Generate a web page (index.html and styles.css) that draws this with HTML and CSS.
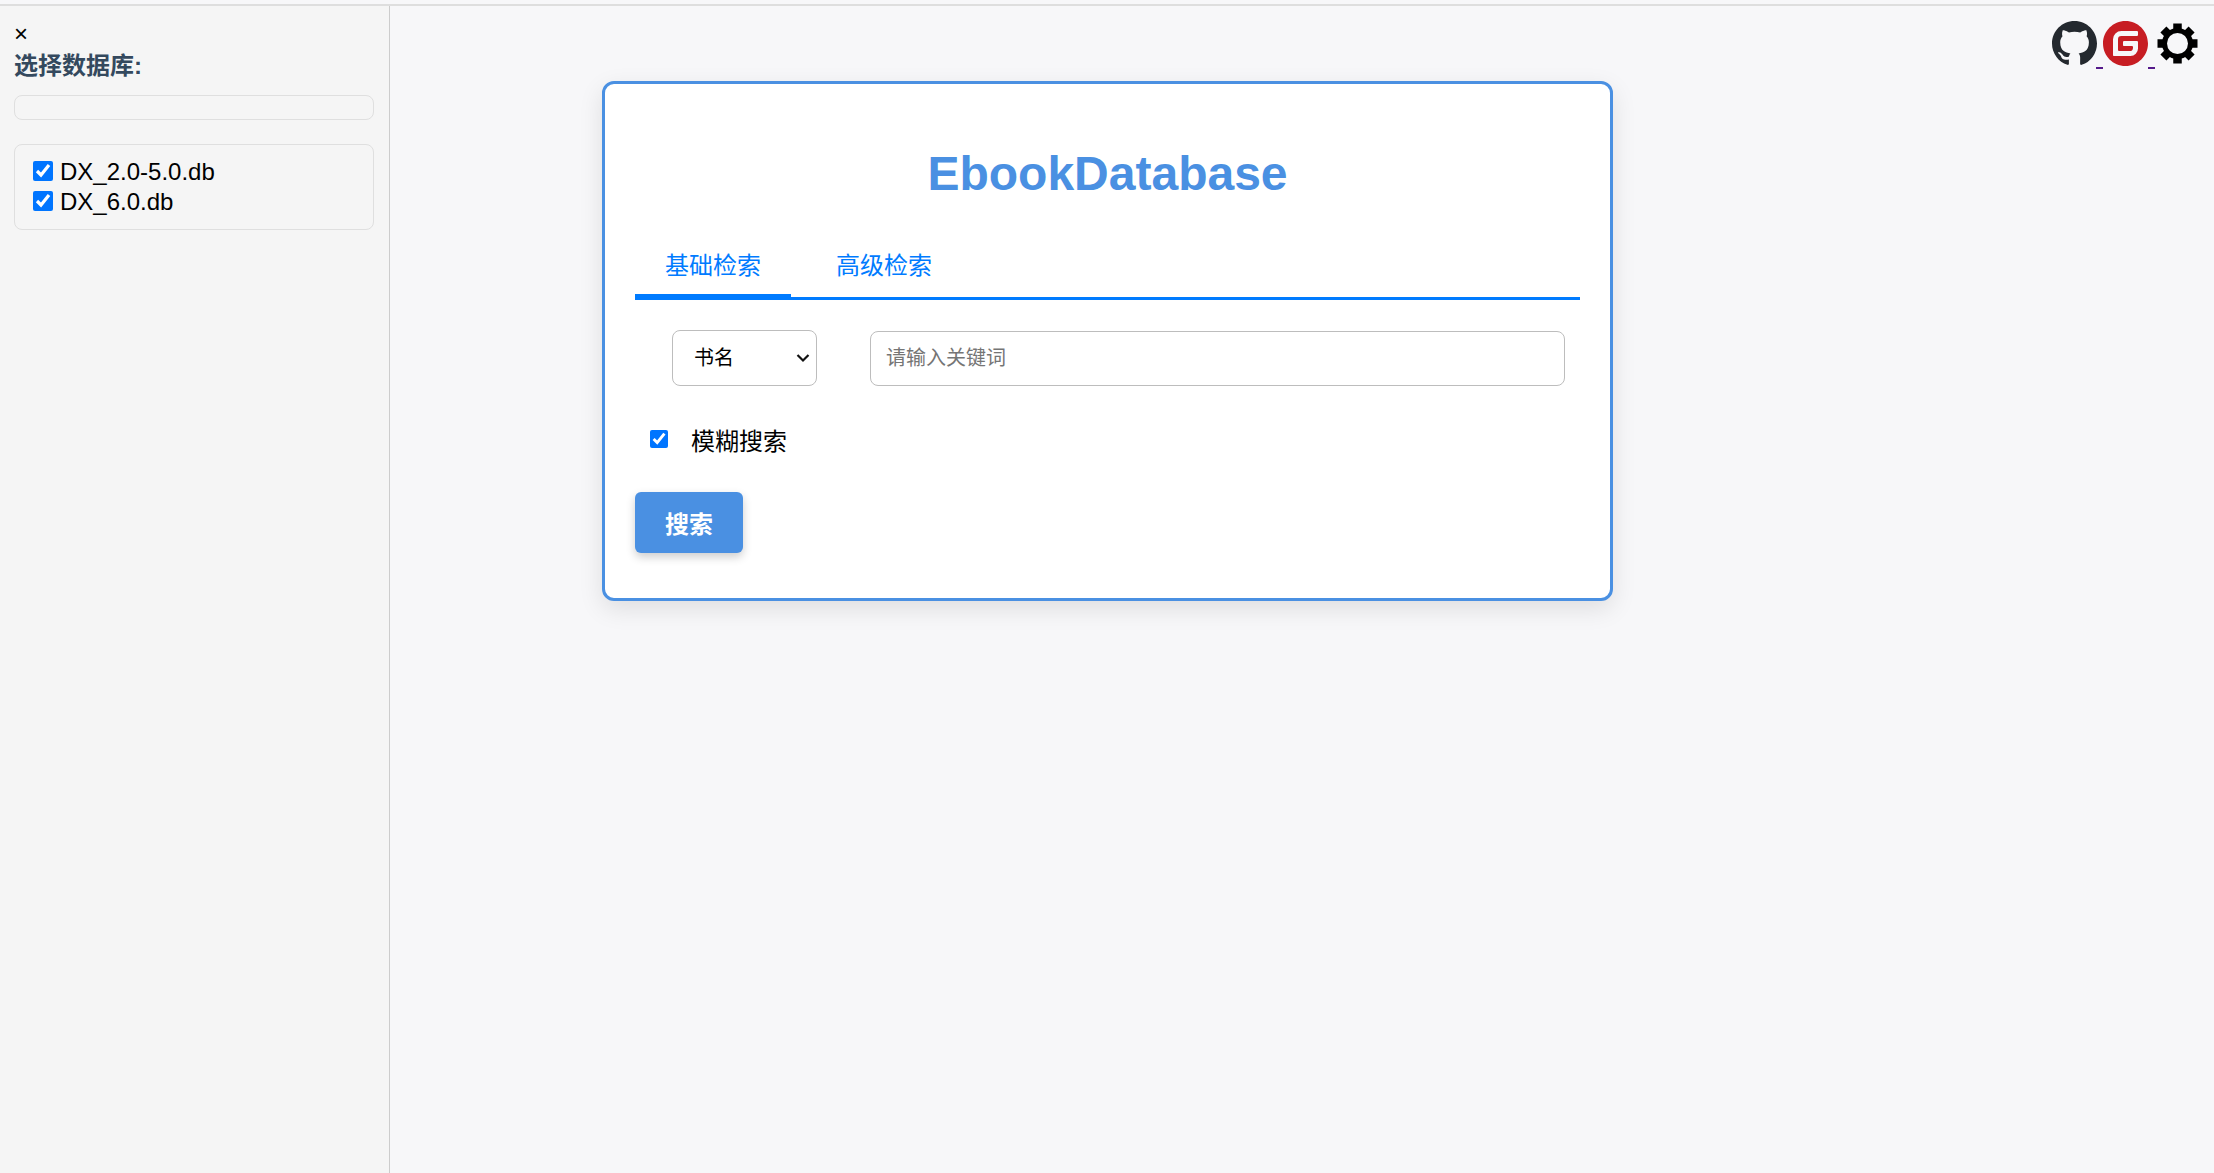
FILE: index.html
```html
<!DOCTYPE html>
<html lang="zh-CN">
<head>
<meta charset="utf-8">
<title>EbookDatabase</title>
<link rel="stylesheet" href="styles.css">
</head>
<body>
<div class="page">
  <aside class="sidebar">
    <div class="close">×</div>
    <div class="side-title">选择数据库:</div>
    <div class="side-empty"></div>
    <div class="db-list">
      <label class="db-item"><input class="db-check" type="checkbox" checked>DX_2.0-5.0.db</label>
      <label class="db-item"><input class="db-check" type="checkbox" checked>DX_6.0.db</label>
    </div>
  </aside>
  <main class="main">
    <section class="card">
      <h1 class="title">EbookDatabase</h1>
      <div class="tabs">
        <div class="tab active">基础检索</div>
        <div class="tab">高级检索</div>
      </div>
      <div class="search-row">
        <div class="select-wrap">
          <select class="field-select"><option>书名</option></select>
          <svg class="chevron" viewBox="0 0 14 10"><path d="M1.500 2L7 7.500L12.500 2" fill="none" stroke="#111" stroke-width="2.200"/></svg>
        </div>
        <input class="keyword" type="text" placeholder="请输入关键词">
      </div>
      <label class="fuzzy"><input class="fuzzy-check" type="checkbox" checked>模糊搜索</label>
      <button class="search-btn">搜索</button>
    </section>
  </main>
  <nav class="top-icons">
    <a class="icon-link" href="#"><svg class="icon" viewBox="0 0 16 16"><path fill="#24292f" d="M8 0C3.58 0 0 3.58 0 8c0 3.54 2.29 6.53 5.47 7.59.4.07.55-.17.55-.38 0-.19-.01-.82-.01-1.49-2.01.37-2.53-.49-2.69-.94-.09-.23-.48-.94-.82-1.13-.28-.15-.68-.52-.01-.53.63-.01 1.08.58 1.23.82.72 1.21 1.87.87 2.33.66.07-.52.28-.87.51-1.07-1.78-.2-3.64-.89-3.64-3.95 0-.87.31-1.59.82-2.15-.08-.2-.36-1.02.08-2.12 0 0 .67-.21 2.2.82.64-.18 1.32-.27 2-.27.68 0 1.36.09 2 .27 1.53-1.04 2.2-.82 2.2-.82.44 1.1.16 1.92.08 2.12.51.56.82 1.27.82 2.15 0 3.07-1.87 3.75-3.65 3.95.29.25.54.73.54 1.48 0 1.07-.01 1.93-.01 2.2 0 .21.15.46.55.38A8.013 8.013 0 0016 8c0-4.42-3.58-8-8-8z"/></svg><span class="dash"></span></a>
    <a class="icon-link" href="#"><svg class="icon" viewBox="0 0 1024 1024"><path fill="#c71d23" d="M512 1024C229.222 1024 0 794.778 0 512S229.222 0 512 0s512 229.222 512 512-229.222 512-512 512z m259.149-568.883h-290.74a25.293 25.293 0 0 0-25.292 25.293l-0.026 63.206c0 13.952 11.315 25.293 25.267 25.293h177.024c13.978 0 25.293 11.315 25.293 25.267v12.646a75.853 75.853 0 0 1-75.853 75.853h-240.23a25.293 25.293 0 0 1-25.267-25.293V417.203a75.853 75.853 0 0 1 75.827-75.853h353.946a25.293 25.293 0 0 0 25.267-25.292l0.077-63.207a25.293 25.293 0 0 0-25.268-25.293H417.152a189.62 189.62 0 0 0-189.62 189.645V771.15c0 13.977 11.316 25.293 25.294 25.293h372.94a170.65 170.65 0 0 0 170.65-170.65V480.384a25.293 25.293 0 0 0-25.293-25.267z"/></svg><span class="dash"></span></a>
    <svg class="gear" viewBox="0 0 41 41">
      <path stroke="#000" stroke-width="8.500" d="M20.500 0.500V40.500M0.500 20.500H40.500M6.400 6.400L34.600 34.600M34.600 6.400L6.400 34.600"/>
      <circle cx="20.500" cy="20.500" r="15.500" fill="#000"/>
      <circle cx="20.500" cy="20.500" r="10.500" fill="#f7f7f9"/>
    </svg>
  </nav>
</div>
</body>
</html>
```
FILE: styles.css
```css
* { box-sizing: border-box; }
html, body { margin: 0; height: 100%; }
body {
  font-family: "Liberation Sans", "Noto Sans CJK SC", sans-serif;
  background: #f7f7f9;
  overflow: hidden;
}
.page {
  position: relative;
  display: flex;
  height: 1169px;
  margin-top: 4px;
  border-top: 2px solid #dedede;
}
.sidebar {
  flex: 0 0 390px;
  padding: 13px 15px 0 14px;
  background: #f5f5f5;
  border-right: 1px solid #ccc;
}
.close {
  font-size: 24px;
  line-height: 30px;
  color: #000;
}
.side-title {
  font-size: 24px;
  line-height: 34px;
  font-weight: 700;
  color: #34495e;
}
.side-empty {
  height: 25px;
  margin-top: 12px;
  border: 1px solid #dfdfdf;
  border-radius: 8px;
}
.db-list {
  margin-top: 24px;
  height: 86px;
  padding: 12px 18px;
  border: 1px solid #dfdfdf;
  border-radius: 8px;
}
.db-item {
  display: flex;
  align-items: center;
  height: 30px;
  font-size: 24px;
  color: #000;
}
.db-check {
  width: 20px;
  height: 20px;
  margin: 0 7px 2px 0;
}
.main {
  flex: 1;
  padding: 75px 0 0 212px;
}
.card {
  width: 1011px;
  height: 520px;
  padding: 30px;
  background: #fff;
  border: 3px solid #4a90e2;
  border-radius: 12px;
  box-shadow: 0 8px 24px rgba(0, 0, 0, 0.1);
}
.title {
  margin: 32px 0 0;
  font-size: 48px;
  line-height: 56px;
  font-weight: 700;
  text-align: center;
  color: #4a90e2;
}
.tabs {
  display: flex;
  gap: 15px;
  margin-top: 30px;
  height: 68px;
  border-bottom: 3px solid #007bff;
}
.tab {
  height: 68px;
  padding: 17px 30px 0;
  font-size: 24px;
  line-height: 34px;
  color: #007bff;
}
.tab.active { border-bottom: 6px solid #007bff; }
.search-row {
  display: flex;
  align-items: center;
  gap: 53px;
  margin-top: 30px;
  padding-left: 37px;
  padding-right: 15px;
}
.select-wrap {
  position: relative;
  flex: 0 0 145px;
  height: 56px;
}
.field-select {
  display: block;
  width: 100%;
  height: 100%;
  padding: 0 21px;
  appearance: none;
  font-family: inherit;
  font-size: 20px;
  color: #000;
  background: #fff;
  border: 1px solid #bdbdbd;
  border-radius: 8px;
}
.chevron {
  position: absolute;
  top: 23px;
  right: 7px;
  width: 14px;
  height: 10px;
  pointer-events: none;
}
.keyword {
  flex: 1;
  height: 55px;
  padding: 0 15px;
  font-family: inherit;
  font-size: 20px;
  border: 1px solid #bdbdbd;
  border-radius: 8px;
}
.keyword::placeholder { color: #757575; }
.fuzzy {
  display: flex;
  align-items: center;
  margin-top: 35px;
  height: 36px;
  font-size: 24px;
  color: #000;
}
.fuzzy-check {
  width: 18px;
  height: 18px;
  margin: 0 23px 0 15px;
}
.search-btn {
  display: block;
  width: 108px;
  height: 61px;
  margin-top: 35px;
  padding: 0;
  font-family: inherit;
  font-size: 24px;
  font-weight: 700;
  color: #fff;
  background: #4a90e2;
  border: 0;
  border-radius: 6px;
  box-shadow: 0 4px 10px rgba(0, 0, 0, 0.2);
}
.top-icons {
  position: absolute;
  top: 15px;
  right: 16px;
  display: flex;
  align-items: flex-start;
}
.icon-link { display: flex; align-items: flex-end; }
.icon { width: 45px; height: 45px; display: block; }
.dash {
  width: 7px;
  height: 2px;
  margin-bottom: -3px;
  background: #551a8b;
}
.icon-link:first-child .dash { margin-left: -1px; }
.gear { width: 41px; height: 41px; margin: 2px 0 0 2px; display: block; }
```
